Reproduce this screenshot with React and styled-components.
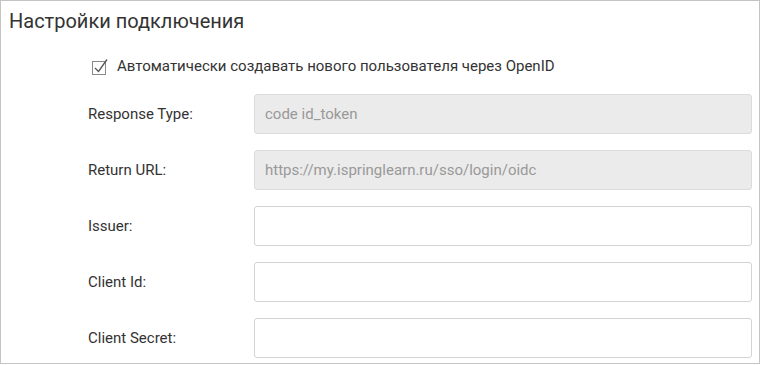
import React from 'react';
import styled, { createGlobalStyle } from 'styled-components';

const GlobalStyle = createGlobalStyle`
  body {
    margin: 0;
    background: #fff;
    font-family: Roboto, "Liberation Sans", sans-serif;
  }
`;

const Panel = styled.section`
  box-sizing: border-box;
  width: 760px;
  height: 364px;
  border: 1px solid #c4c4c4;
  padding-top: 8px;
  overflow: hidden;
`;

const Title = styled.h2`
  margin: 0;
  padding-left: 8px;
  font-size: 20px;
  line-height: 24px;
  font-weight: 400;
  color: #333;
`;

const CheckRow = styled.label`
  display: flex;
  align-items: center;
  gap: 9px;
  height: 20px;
  margin-top: 23px;
  padding-left: 91px;
  font-size: 15px;
  color: #333;
`;

const Fields = styled.div`
  display: grid;
  grid-template-columns: 166px 498px;
  row-gap: 16px;
  align-items: center;
  margin-top: 18px;
  padding-left: 87px;
`;

const Label = styled.span`
  font-size: 15px;
  color: #333;
`;

const Input = styled.input`
  box-sizing: border-box;
  width: 100%;
  height: 40px;
  padding: 0 10px;
  border: 1px solid ${p => (p.disabled ? '#dcdcdc' : '#d3d3d3')};
  border-radius: 3px;
  background: ${p => (p.disabled ? '#ebebeb' : '#fff')};
  color: #999;
  font-family: inherit;
  font-size: 15px;
  outline: none;
  -webkit-text-fill-color: #999;
  opacity: 1;
`;

function CheckMark() {
  return (
    <svg width="16" height="17" viewBox="0 0 16 17">
      <rect x="0.5" y="3.5" width="13" height="13" fill="none" stroke="#8a8a8a" />
      <path d="M3 10 L6.5 13.5 L15 1.5" fill="none" stroke="#555" strokeWidth="1.3" />
    </svg>
  );
}

const fields = [
  { label: 'Response Type:', value: 'code id_token', disabled: true },
  { label: 'Return URL:', value: 'https://my.ispringlearn.ru/sso/login/oidc', disabled: true },
  { label: 'Issuer:', value: '' },
  { label: 'Client Id:', value: '' },
  { label: 'Client Secret:', value: '' },
];

export default function App() {
  return (
    <>
      <GlobalStyle />
      <Panel>
        <Title>Настройки подключения</Title>
        <CheckRow>
          <CheckMark />
          Автоматически создавать нового пользователя через OpenID
        </CheckRow>
        <Fields>
          {fields.map(f => (
            <React.Fragment key={f.label}>
              <Label>{f.label}</Label>
              <Input defaultValue={f.value} disabled={f.disabled} readOnly={!f.disabled} />
            </React.Fragment>
          ))}
        </Fields>
      </Panel>
    </>
  );
}
